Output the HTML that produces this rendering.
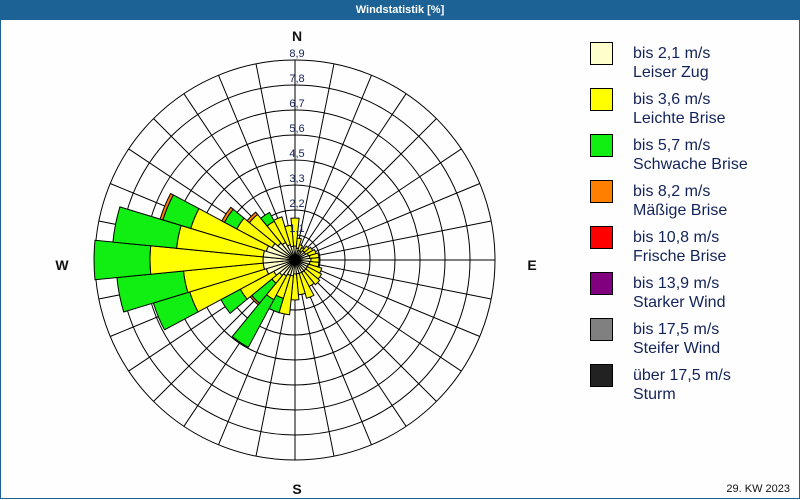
<!DOCTYPE html>
<html><head><meta charset="utf-8"><style>
html,body{margin:0;padding:0;background:#fff}
#w{position:relative;width:798px;height:498px;border:1px solid #1d6294;border-top:none;overflow:hidden;background:#fdfefd;font-family:"Liberation Sans",sans-serif}
#t{height:20px;background:#1d6294;color:#fff;font-size:11px;font-weight:bold;text-align:center;line-height:20px}
.lg{position:absolute;left:589px;width:23px;height:23px;border:1px solid #000;box-sizing:border-box}
.lt{position:absolute;left:632px;font-size:16px;line-height:19px;color:#13235a}
#f{position:absolute;right:9px;top:483px;font-size:11px;color:#111}
svg{position:absolute;left:0;top:0}
</style></head><body><div id="w">
<div id="t">Windstatistik [%]</div>
<svg id="s" width="800" height="500" xmlns="http://www.w3.org/2000/svg"></svg>
<div class="lg" style="top:42px;background:#ffffcc"></div><div class="lt" style="top:44px">bis 2,1 m/s<br>Leiser Zug</div>
<div class="lg" style="top:88px;background:#ffff00"></div><div class="lt" style="top:90px">bis 3,6 m/s<br>Leichte Brise</div>
<div class="lg" style="top:134px;background:#11ee11"></div><div class="lt" style="top:136px">bis 5,7 m/s<br>Schwache Brise</div>
<div class="lg" style="top:180px;background:#ff7f00"></div><div class="lt" style="top:182px">bis 8,2 m/s<br>Mäßige Brise</div>
<div class="lg" style="top:226px;background:#ff0000"></div><div class="lt" style="top:228px">bis 10,8 m/s<br>Frische Brise</div>
<div class="lg" style="top:272px;background:#800080"></div><div class="lt" style="top:274px">bis 13,9 m/s<br>Starker Wind</div>
<div class="lg" style="top:318px;background:#808080"></div><div class="lt" style="top:320px">bis 17,5 m/s<br>Steifer Wind</div>
<div class="lg" style="top:364px;background:#222222"></div><div class="lt" style="top:366px">über 17,5 m/s<br>Sturm</div>
<div id="f">29. KW 2023</div>
</div>
<script>
var s=document.getElementById('s'),cx=294,cy=260,R=200,h='';
function P(r,a){a=(a-90)*Math.PI/180;return [(cx+r*Math.cos(a)).toFixed(1),(cy+r*Math.sin(a)).toFixed(1)];}
for(var k=1;k<=8;k++)h+='<circle cx="'+cx+'" cy="'+cy+'" r="'+(25*k)+'" fill="none" stroke="#000" stroke-width="1"/>';
for(var i=0;i<32;i++){var p=P(R,i*11.25);h+='<line x1="'+cx+'" y1="'+cy+'" x2="'+p[0]+'" y2="'+p[1]+'" stroke="#000" stroke-width="1"/>';}
function seg(a,r0,r1,c){var w=5.625,A=P(r0,a-w),B=P(r1,a-w),C=P(r1,a+w),D=P(r0,a+w);
return '<path d="M'+A+'L'+B+'A'+r1+' '+r1+' 0 0 1 '+C+'L'+D+(r0>0?'A'+r0+' '+r0+' 0 0 0 '+A:'')+'Z" fill="'+c+'" stroke="#000" stroke-width="1"/>';}
var cols=['#ffffcc','#ffff00','#11ee11','#ff7f00'];
// [index (0=N), cumulative radii]
var d=[[0,[14,42]],[1,[12,22]],[2,[10,16]],[3,[10,14]],[4,[12,18]],[5,[12,20]],[6,[14,22]],[7,[15,24]],[8,[16,24]],[9,[15,24]],[10,[14,28]],[11,[14,30]],[12,[14,32]],[13,[14,30]],[14,[14,40]],[15,[14,35]],[16,[14,40]],[17,[16,55]],[18,[16,40,55]],[19,[18,45,99]],[20,[20,30,56,58]],[21,[24,62,84]],[22,[30,110,148]],[23,[32,112,179]],[24,[32,145,201]],[25,[32,119,183]],[26,[30,109,138,141]],[27,[26,66,80,83]],[28,[22,59,59,62]],[29,[20,44,54]],[30,[16,45]],[31,[14,35]]];
d.forEach(function(e){var r0=0;e[1].forEach(function(r,j){if(r>r0){h+=seg(e[0]*11.25,r0,r,cols[j]);r0=r;}});});
var lb=['1,1','2,2','3,3','4,5','5,6','6,7','7,8','8,9'];
for(k=1;k<=8;k++)h+='<text x="'+(cx+2)+'" y="'+(cy-25*k-3)+'" font-size="11" fill="#13235a" text-anchor="middle" font-family="Liberation Sans,sans-serif">'+lb[k-1]+'</text>';
h+='<g font-family="Liberation Sans,sans-serif" font-weight="bold" font-size="14" fill="#111" text-anchor="middle"><text x="296" y="41">N</text><text x="296" y="494">S</text><text x="61" y="270">W</text><text x="531" y="270">E</text></g>';
s.innerHTML=h;
</script>
</body></html>
